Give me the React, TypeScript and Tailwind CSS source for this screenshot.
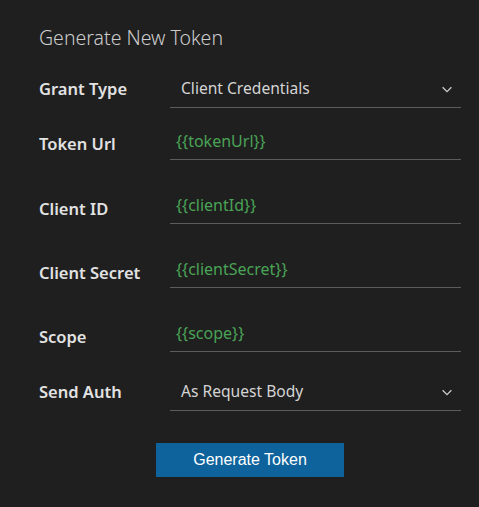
import { ReactNode } from 'react';

function Chevron() {
  return (
    <svg width="14" height="14" viewBox="0 0 16 16" fill="none" className="text-[#cccccc]">
      <path d="M3 6l5 5 5-5" stroke="currentColor" strokeWidth="1.5" />
    </svg>
  );
}

interface RowProps {
  label: string;
  children: ReactNode;
  className?: string;
  labelClass?: string;
}

function Row({ label, children, className = '', labelClass = '' }: RowProps) {
  return (
    <div className={`flex items-center ${className}`}>
      <div className={`w-[131px] shrink-0 text-[16.5px] font-semibold text-[#e2e2e2] ${labelClass}`}>{label}</div>
      {children}
    </div>
  );
}

function SelectField({ value }: { value: string }) {
  return (
    <div className="flex h-[37px] w-[291px] items-center justify-between border-b border-[#5c5c5c] pl-[11px] pr-[7px]">
      <span className="text-[15.6px] text-[#d4d4d4]">{value}</span>
      <Chevron />
    </div>
  );
}

function VarField({ value }: { value: string }) {
  return (
    <div className="flex h-[37px] w-[291px] items-center border-b border-[#5c5c5c] pl-[6px]">
      <span className="text-[16px] text-[#4aa356]">{value}</span>
    </div>
  );
}

export default function App() {
  return (
    <div className="min-h-[507px] w-[479px] bg-[#1f1f1f] pl-[39px] pt-[24px] font-['Noto_Sans',sans-serif]">
      <h1 className="text-[19.5px] font-light leading-[28px] text-[#cccccc]">Generate New Token</h1>

      <Row label="Grant Type" className="mt-[19px]">
        <SelectField value="Client Credentials" />
      </Row>
      <Row label="Token Url" className="mt-[15px]" labelClass="mt-[6px]">
        <VarField value="{{tokenUrl}}" />
      </Row>
      <Row label="Client ID" className="mt-[27px]" labelClass="mt-[8px]">
        <VarField value="{{clientId}}" />
      </Row>
      <Row label="Client Secret" className="mt-[27px]" labelClass="mt-[8px]">
        <VarField value="{{clientSecret}}" />
      </Row>
      <Row label="Scope" className="mt-[27px]" labelClass="mt-[8px]">
        <VarField value="{{scope}}" />
      </Row>
      <Row label="Send Auth" className="mt-[22px]">
        <SelectField value="As Request Body" />
      </Row>

      <div className="mt-[32px] flex w-[422px] justify-center">
        <button className="h-[34px] w-[188px] bg-[#0e639c] font-['Liberation_Sans',sans-serif] text-[16px] text-white">
          Generate Token
        </button>
      </div>
    </div>
  );
}
